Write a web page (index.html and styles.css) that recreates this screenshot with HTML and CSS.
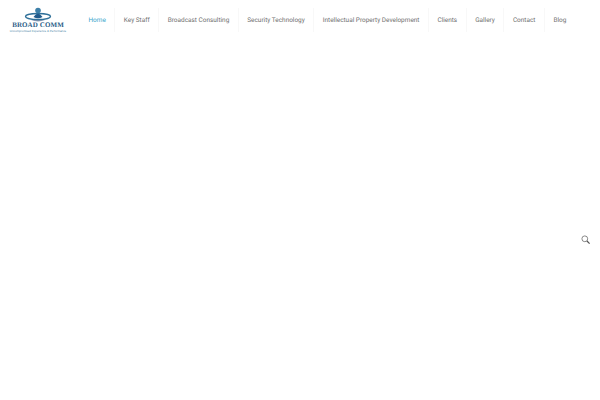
FILE: index.html
```html
<!DOCTYPE html>
<html lang="en">
<head>
<meta charset="utf-8">
<title>Broad Comm</title>
<link rel="stylesheet" href="styles.css">
</head>
<body>
<header class="header">
  <a class="logo" href="#">
    <svg class="logo-mark" width="40" height="16" viewBox="0 0 40 16" aria-hidden="true">
      <ellipse cx="20" cy="9.5" rx="12.5" ry="3" fill="none" stroke="#2f7099" stroke-width="1.4"/>
      <path d="M13 13 Q20 15.5 27 13 Q20 14 13 13Z" fill="#1d3f6e"/>
      <circle cx="20" cy="3.6" r="2.8" fill="#3d7fa8"/>
      <path d="M15.5 10 Q20 3 24.5 10 Q20 12.5 15.5 10Z" fill="#1f5a8c"/>
    </svg>
    <span class="logo-name">BROAD COMM</span>
    <span class="logo-tag">Uncompromised Experience &amp; Performance</span>
  </a>
  <nav class="nav">
    <a class="nav-item is-active" href="#">Home</a>
    <a class="nav-item" href="#">Key Staff</a>
    <a class="nav-item" href="#">Broadcast Consulting</a>
    <a class="nav-item" href="#">Security Technology</a>
    <a class="nav-item" href="#">Intellectual Property Development</a>
    <a class="nav-item" href="#">Clients</a>
    <a class="nav-item" href="#">Gallery</a>
    <a class="nav-item" href="#">Contact</a>
    <a class="nav-item" href="#">Blog</a>
  </nav>
</header>
<button class="search" type="button" aria-label="Search">
  <svg width="9" height="9" viewBox="0 0 9 9" aria-hidden="true">
    <circle cx="3.8" cy="3.8" r="2.9" fill="none" stroke="#888" stroke-width="1"/>
    <path d="M6 6 L8.6 8.6" stroke="#555" stroke-width="1.2"/>
  </svg>
</button>
</body>
</html>
```
FILE: styles.css
```css
html, body {
  margin: 0;
  padding: 0;
  height: 100%;
  background: #fff;
  font-family: Roboto, "Liberation Sans", sans-serif;
  text-rendering: geometricPrecision;
}
.header {
  display: flex;
  align-items: flex-start;
  padding: 7px 0 0 10px;
}
.logo {
  display: flex;
  flex-direction: column;
  align-items: center;
  width: 56px;
  text-decoration: none;
}
.logo-mark {
  display: block;
}
.logo-name {
  font-family: "Liberation Serif", serif;
  font-weight: 700;
  font-size: 7px;
  line-height: 5px;
  letter-spacing: 0.1px;
  white-space: nowrap;
  color: #2a5c86;
}
.logo-tag {
  margin-top: 1px;
  font-family: "Liberation Sans", sans-serif;
  font-size: 2.9px;
  line-height: 4px;
  white-space: nowrap;
  color: #4d87a8;
}
.nav {
  display: flex;
  margin: 1px 0 0 14px;
}
.nav-item {
  padding: 0 8.5px;
  height: 24px;
  line-height: 24px;
  font-size: 6.45px;
  color: #707070;
  text-decoration: none;
  white-space: nowrap;
  border-right: 1px solid #f8f8f8;
}
.nav-item:last-child {
  border-right: 0;
}
.is-active {
  color: #35a6cc;
}
.search {
  position: absolute;
  left: 581px;
  top: 235px;
  width: 9px;
  height: 9px;
  padding: 0;
  border: 0;
  background: none;
  line-height: 0;
}
```
